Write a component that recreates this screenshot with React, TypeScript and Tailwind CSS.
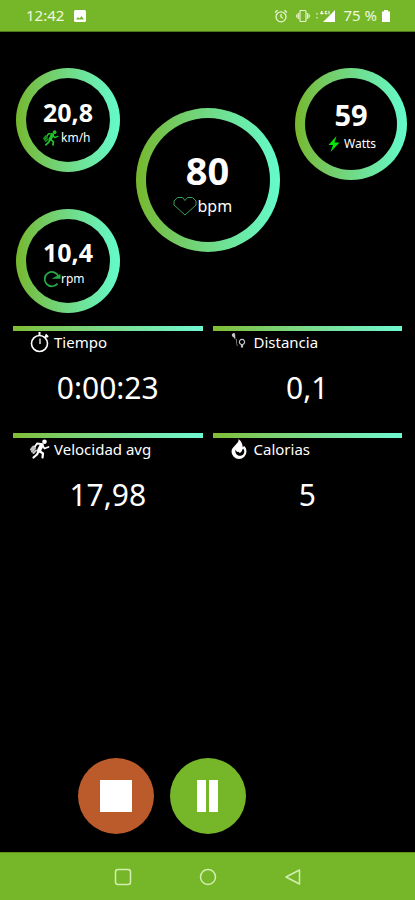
import type { ReactNode } from 'react';

type GaugeProps = {
    value: string;
    unit: string;
    icon: ReactNode;
    size: string;
    valueClass: string;
    unitClass: string;
};

const Gauge = ({ value, unit, icon, size, valueClass, unitClass }: GaugeProps) => (
    <div className={`${size} shrink-0 rounded-full bg-linear-to-r from-[#76b82a] to-[#64fbcb] p-[10px]`}>
        <div className="flex h-full w-full flex-col items-center justify-center rounded-full bg-black">
            <span className={`${valueClass} font-bold`}>{value}</span>
            <div className={`${unitClass} flex items-center`}>
                {icon}
                <span>{unit}</span>
            </div>
        </div>
    </div>
);

const RunnerIcon = ({ className }: { className: string }) => (
    <svg viewBox="0 0 20 20" className={className} fill="none" stroke="currentColor" strokeLinecap="round" strokeLinejoin="round">
        <circle cx="14.500" cy="2.700" r="2.300" fill="currentColor" stroke="none" />
        <path d="M11.800 6 9 11.500" strokeWidth="4" />
        <path d="M12.500 6.500 14.500 9.500l4-1.500" strokeWidth="1.800" />
        <path d="M11 5 7 4.500 5 7.500" strokeWidth="1.800" />
        <path d="m9.500 12 3.500 2.500-.5 4" strokeWidth="2.200" />
        <path d="m8.500 12.500-1.500 3-3.500 3" strokeWidth="2.200" />
        <path d="M5 9 2 12.500M6 11.500 3.500 14M3.500 7.500 1 10.500" strokeWidth="2" opacity="0.75" />
    </svg>
);

const HeartIcon = () => (
    <svg viewBox="0 0 24 20" className="h-5 w-6 shrink-0" fill="none" stroke="#37a05c" strokeWidth="1">
        <path d="M12 4.500 9.500 1.500H4.500L1 5v4l11 10L23 9V5l-3.500-3.500h-5z" />
    </svg>
);

const BoltIcon = () => (
    <svg viewBox="0 0 16 18" className="h-[18px] w-4 shrink-0" fill="#0be30b">
        <path d="M10.500 1 2.500 10h4.500L4.500 17 13.500 7.500H8.500z" />
    </svg>
);

const RotateIcon = () => (
    <svg viewBox="0 0 18 18" className="h-[18px] w-[18px] shrink-0" fill="none" stroke="#27a844" strokeWidth="1.800">
        <path d="M14.500 13.600A7.200 7.200 0 1 1 15.600 6.500" />
        <path d="M8.500 8.800h9V4z" fill="#27a844" stroke="none" />
    </svg>
);

const StopwatchIcon = () => (
    <svg viewBox="0 0 20 22" className="h-[22px] w-5" fill="none" stroke="#fff" strokeWidth="1.600">
        <circle cx="9.500" cy="12.500" r="8" />
        <path d="M9.500 4.500V1M15 6.500l2-2M15.500 3.500l2.500 2.500" strokeWidth="2" />
        <path d="M10 13V7.500" stroke="#d0d0d0" />
    </svg>
);

const RouteIcon = () => (
    <svg viewBox="0 0 20 22" className="h-[22px] w-5" fill="none" stroke="#c4c4c4" strokeWidth="1.200">
        <path d="M4.500 3a1.300 1.300 0 1 0-1 2.300l1.200 1.500z" fill="#c4c4c4" />
        <path d="M6.500 8v4.500l1 2.500" stroke="#6f6f6f" strokeWidth="1" />
        <path d="M11.500 16v-2.500a2.600 2.600 0 1 1 1 0V16z" />
    </svg>
);

const FlameIcon = () => (
    <svg viewBox="0 0 20 22" className="h-[22px] w-5" fill="#fff">
        <path
            fillRule="evenodd"
            d="M8.500 1c.5 3-1.500 4-3.500 6.500C3 9.500 1.500 11 1.500 13.500a7.500 7.500 0 0 0 15 0c0-2.300-.8-4.300-2.500-5.800-.3.800-.6 1.300-1.200 1.600C12.500 6 11.500 3 8.500 1zM13 10.500c1.500 1.500 1.700 3.500.7 5.200-1.300 2.300-4.800 3-7 .8-1.300-1.300-1.700-3.500-1-5 .3 1.500 1 2.300 2.300 2.800-.5-2.300.5-4 1.500-5.300.2 1.800 1.300 2.500 1.500 4 .8-.5 1.800-1.300 2-2.500z"
        />
        <path d="M8.500 3c1 3-2 6-2 9.500l3.500 2.500 2-2V8z" />
    </svg>
);

const Stat = ({ icon, label, value }: { icon: ReactNode; label: string; value: string }) => (
    <div>
        <div className="h-[5px] bg-linear-to-r from-[#7fbd32] to-[#70f8d2]" />
        <div className="flex h-[22px] items-center gap-1 pl-[17px] text-[15px]">
            {icon}
            <span>{label}</span>
        </div>
        <p className="pt-[14px] text-center text-[30px] leading-[42px]">{value}</p>
    </div>
);

const StatusBar = () => (
    <header className="flex h-8 items-center border-b border-[#4c7619] bg-[#76b729] pr-6 pl-[26px] text-[15px] text-[#eff8df]">
        <span>12:42</span>
        <svg viewBox="0 0 12 12" className="ml-[10px] h-3 w-3">
            <rect width="12" height="12" rx="1.500" fill="#fff" />
            <path d="m2 9.500 2-2.500 1.500 1.500L7.500 6 10 9.500z" fill="#76b729" />
        </svg>
        <svg viewBox="0 0 14 14" className="ml-auto h-[14px] w-[14px]" fill="none" stroke="#e6f4cf" strokeWidth="1.300">
            <circle cx="7" cy="7.800" r="5" />
            <path d="M7 5v3l2 1.200M1 3.500 3.500 1.200M13 3.500l-2.500-2.300" />
        </svg>
        <svg viewBox="0 0 14 14" className="ml-2 h-[14px] w-[14px]" fill="none" stroke="#e6f4cf" strokeWidth="1.200">
            <rect x="4" y="1.500" width="6" height="11" rx="1" />
            <path d="M2.300 4v6M11.700 4v6M.7 5.500v3M13.300 5.500v3" />
        </svg>
        <svg viewBox="0 0 20 14" className="ml-[6px] h-[14px] w-5" fill="#fff">
            <path d="M19 1v12H7zM.5 4h1v1.500h-1zM.5 8h1v1.500h-1z" />
            <path d="M6 5.500V2L4.500 4.500h3M11 2.300H9.300v2.500H11V3.800M13 1.800v3.500" fill="none" stroke="#fff" />
        </svg>
        <span className="ml-[7px]">75 %</span>
        <svg viewBox="0 0 10 14" className="ml-1 h-[14px] w-[10px]" fill="#fff">
            <path d="M3 1h4v1.500h2V13H1V2.500h2z" />
        </svg>
    </header>
);

const NavBar = () => (
    <nav className="flex h-12 items-center justify-center gap-[61px] border-t border-[#5f931f] bg-[#76b729]">
        <button aria-label="Recientes">
            <svg viewBox="0 0 24 24" className="h-6 w-6" fill="none" stroke="#d3eeb0" strokeWidth="1.500">
                <rect x="4.500" y="4.500" width="15" height="15" rx="2.500" />
            </svg>
        </button>
        <button aria-label="Inicio">
            <svg viewBox="0 0 24 24" className="h-6 w-6" fill="none" stroke="#d3eeb0" strokeWidth="1.500">
                <circle cx="12" cy="12" r="7.500" />
            </svg>
        </button>
        <button aria-label="Atrás">
            <svg viewBox="0 0 24 24" className="h-6 w-6" fill="none" stroke="#d3eeb0" strokeWidth="1.500" strokeLinejoin="round">
                <path d="M18.500 5v14L5 12z" />
            </svg>
        </button>
    </nav>
);

const App = () => (
    <div className="flex min-h-screen flex-col bg-black font-['Noto_Sans',sans-serif] text-white">
        <StatusBar />

        <main className="flex grow flex-col">
            <section className="flex items-start justify-between pt-9 pr-2 pl-4">
                <div className="flex flex-col gap-[37px]">
                    <Gauge
                        value="20,8"
                        unit="km/h"
                        icon={<RunnerIcon className="h-4 w-4 shrink-0 text-[#1fc42a]" />}
                        size="size-[104px]"
                        valueClass="text-[25px] leading-9"
                        unitClass="w-[50px] gap-[2px] text-xs leading-4"
                    />
                    <Gauge
                        value="10,4"
                        unit="rpm"
                        icon={<RotateIcon />}
                        size="size-[104px]"
                        valueClass="text-[25px] leading-9"
                        unitClass="w-[50px] text-xs leading-4"
                    />
                </div>
                <div className="pt-10">
                    <Gauge
                        value="80"
                        unit="bpm"
                        icon={<HeartIcon />}
                        size="size-36"
                        valueClass="text-[38px] leading-[52px]"
                        unitClass="w-[70px] gap-[1px] text-base leading-4"
                    />
                </div>
                <Gauge
                    value="59"
                    unit="Watts"
                    icon={<BoltIcon />}
                    size="size-28"
                    valueClass="text-[29px] leading-10"
                    unitClass="w-[50px] gap-[2px] text-xs leading-4"
                />
            </section>

            <section className="grid grid-cols-2 gap-x-[10px] gap-y-6 px-[13px] pt-[13px]">
                <Stat icon={<StopwatchIcon />} label="Tiempo" value="0:00:23" />
                <Stat icon={<RouteIcon />} label="Distancia" value="0,1" />
                <Stat icon={<RunnerIcon className="h-5 w-5" />} label="Velocidad avg" value="17,98" />
                <Stat icon={<FlameIcon />} label="Calorias" value="5" />
            </section>

            {/* pause stays in the middle, stop on its left */}
            <section className="mt-auto grid grid-cols-[76px_76px_76px] justify-center gap-4 pb-[18px]">
                <button aria-label="Parar" className="flex size-[76px] items-center justify-center rounded-full bg-[#bb5a2a]">
                    <span className="size-8 bg-white" />
                </button>
                <button aria-label="Pausar" className="flex size-[76px] items-center justify-center gap-[3px] rounded-full bg-[#76b729]">
                    <span className="h-8 w-[9px] bg-white" />
                    <span className="h-8 w-[9px] bg-white" />
                </button>
            </section>
        </main>

        <NavBar />
    </div>
);

export default App;
